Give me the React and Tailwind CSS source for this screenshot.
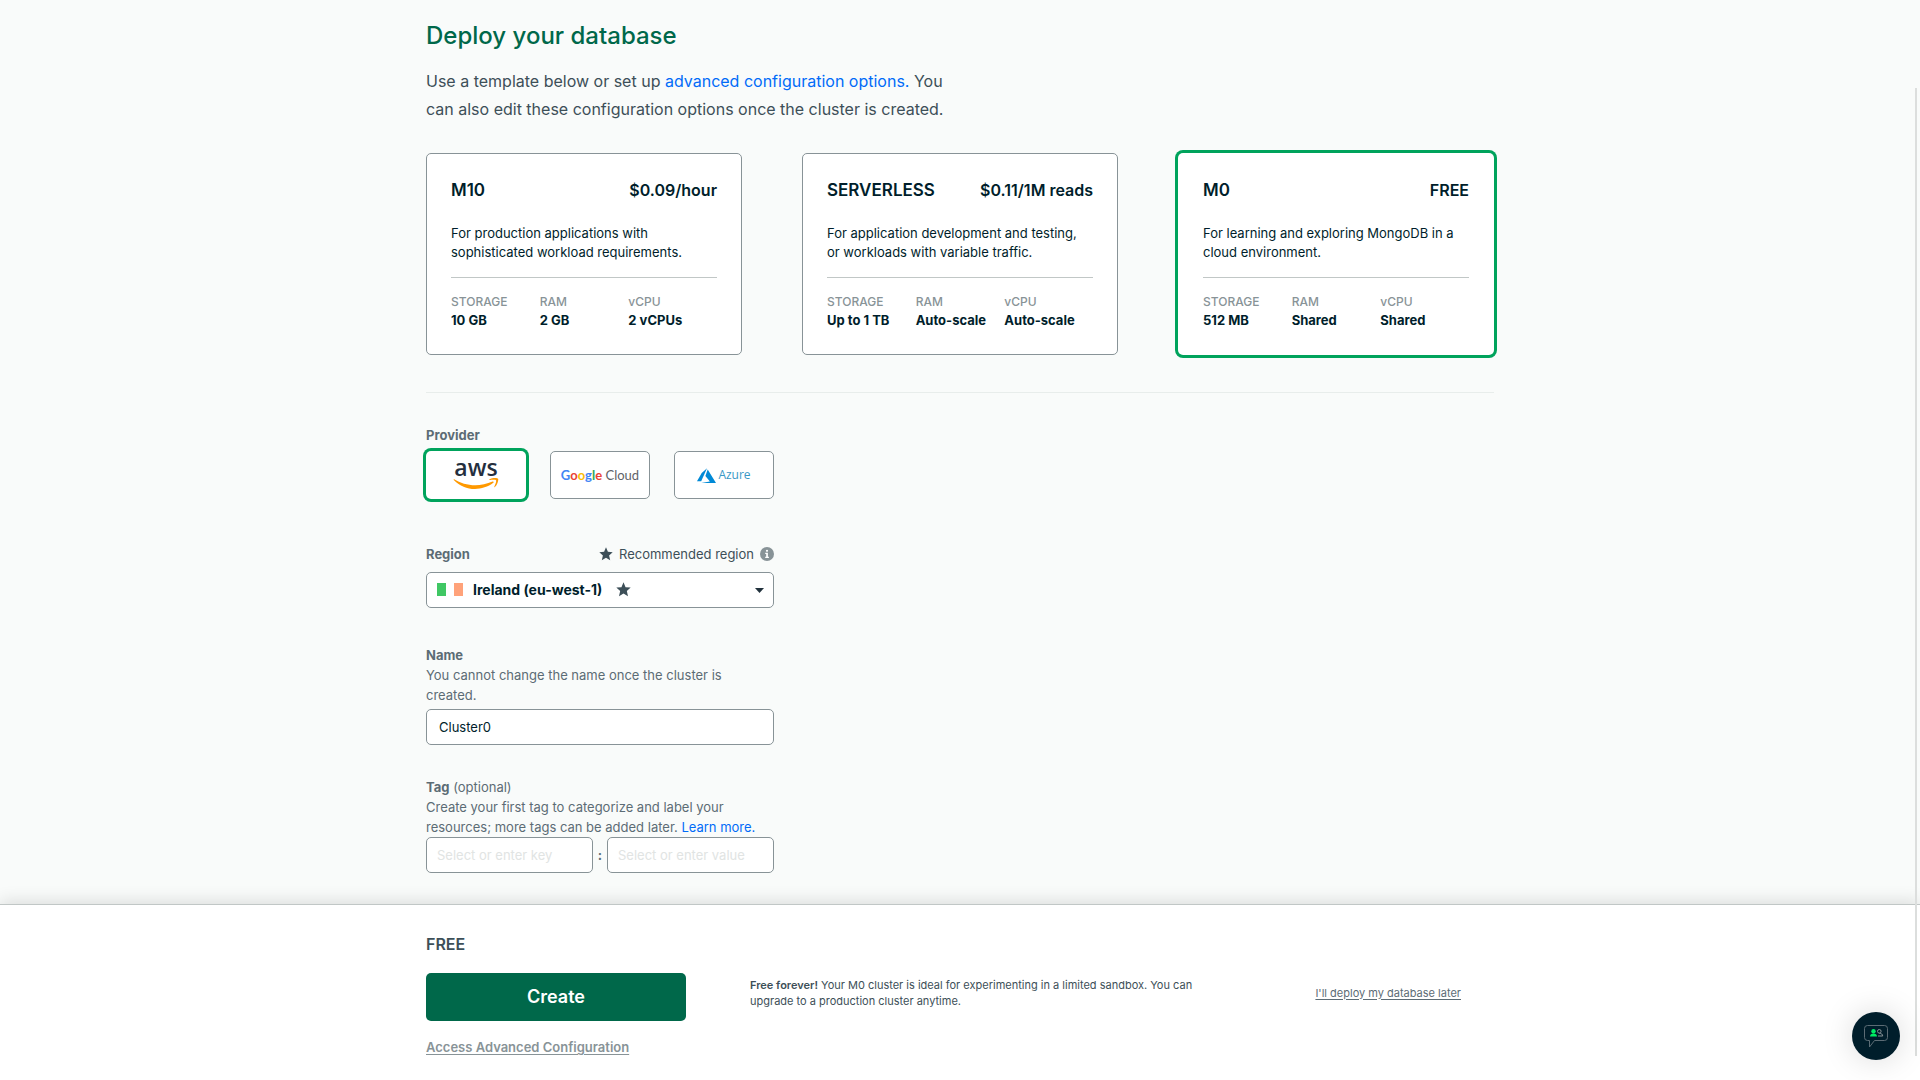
import { useState } from 'react';

const PLANS = [
  {
    id: 'M10',
    price: '$0.09/hour',
    description: 'For production applications with sophisticated workload requirements.',
    specs: { STORAGE: '10 GB', RAM: '2 GB', vCPU: '2 vCPUs' },
  },
  {
    id: 'SERVERLESS',
    price: '$0.11/1M reads',
    description: 'For application development and testing, or workloads with variable traffic.',
    specs: { STORAGE: 'Up to 1 TB', RAM: 'Auto-scale', vCPU: 'Auto-scale' },
  },
  {
    id: 'M0',
    price: 'FREE',
    description: 'For learning and exploring MongoDB in a cloud environment.',
    specs: { STORAGE: '512 MB', RAM: 'Shared', vCPU: 'Shared' },
  },
];

const PROVIDERS = [
  { id: 'aws', Logo: AwsLogo },
  { id: 'gcp', Logo: GoogleCloudLogo },
  { id: 'azure', Logo: AzureLogo },
];

function AwsLogo() {
  return (
    <span className="flex flex-col items-center pb-1">
      <span className="font-['Open_Sans'] text-[23px] leading-[22px] font-semibold text-[#252f3e]">aws</span>
      <svg className="h-3 w-[46px]" viewBox="0 0 46 12" fill="#ff9900">
        <path d="M1.200 1.200C7 4.900 14.500 7.200 22.200 7.200c5.700 0 11.800-1.200 17.400-3.600.9-.4 1.600.6.7 1.200C35.200 8.800 28.200 11 22 11 14 11 6.600 7.900 1 2.200.400 1.700.700.900 1.200 1.200z" />
        <path d="M43 2.200c-.6-.8-4.600-.4-6.600-.1-.5.100-.5-.4-.1-.7 3.200-1.900 8.300-1.400 8.800-.7.500.7-.1 5.700-3.200 8.400-.4.300-.8.200-.6-.3.600-1.500 2.400-5.200 1.700-6.600z" />
      </svg>
    </span>
  );
}

function GoogleCloudLogo() {
  return (
    <span className="font-['Lato'] text-[13px] whitespace-nowrap text-[#5f6368]">
      <span className="font-bold">
        <span className="text-[#4285f4]">G</span>
        <span className="text-[#ea4335]">o</span>
        <span className="text-[#fbbc05]">o</span>
        <span className="text-[#4285f4]">g</span>
        <span className="text-[#34a853]">l</span>
        <span className="text-[#ea4335]">e</span>
      </span>{' '}
      Cloud
    </span>
  );
}

function AzureLogo() {
  return (
    <span className="flex items-center gap-0.5">
      <svg className="h-[15px] w-[19px]" viewBox="0 0 19 15" fill="#0089d6">
        <path d="M10 0.300 4.700 4.900 0 13.300h4.200z" />
        <path d="M10.700 1.400 8.400 7.900l4.500 5.600-8.700 1.500H19z" />
      </svg>
      <span className="font-['Open_Sans'] text-xs font-medium text-[#3999c6]">Azure</span>
    </span>
  );
}

function StarIcon({ className }) {
  return (
    <svg className={className} viewBox="0 0 14 14" fill="#3d4f58">
      <path d="M7 .3l1.900 4.500 4.800.4-3.600 3.200 1.100 4.800L7 10.700l-4.200 2.500 1.100-4.800L.300 5.200l4.800-.4z" />
    </svg>
  );
}

function InfoIcon() {
  return (
    <svg className="h-3.5 w-3.5" viewBox="0 0 14 14">
      <circle cx="7" cy="7" r="7" fill="#889397" />
      <path d="M5.200 5.700h2.700v4h1V11H5.200V9.700h1V7h-1z" fill="#fff" />
      <circle cx="7" cy="3.800" r="1.100" fill="#fff" />
    </svg>
  );
}

function PlanCard({ plan, selected, onSelect }) {
  return (
    <button
      type="button"
      aria-pressed={selected}
      onClick={onSelect}
      className={`rounded-[5px] border bg-white p-6 text-left text-[#001e2b] ${
        selected ? 'border-transparent ring-3 ring-[#00a35c]' : 'border-[#889397]'
      }`}
    >
      <span className="flex justify-between leading-6">
        <span className="text-[17px] leading-6 font-semibold">{plan.id}</span>
        <span className="text-base leading-6 font-semibold">{plan.price}</span>
      </span>
      <span className="mt-[22px] block text-[13px] leading-[19px]">{plan.description}</span>
      <span className="mt-[15px] grid grid-cols-3 border-t border-[#c1c7c6] pt-3.5 leading-[19px]">
        {Object.entries(plan.specs).map(([label, value]) => (
          <span key={label} className="whitespace-nowrap">
            <span className="block text-xs leading-[19px] font-medium text-[#889397]">{label}</span>
            <span className="block text-[13px] leading-[19px] font-bold">{value}</span>
          </span>
        ))}
      </span>
    </button>
  );
}

function ChatButton() {
  return (
    <button
      type="button"
      aria-label="Open support chat"
      className="fixed right-5 bottom-5 z-20 flex h-12 w-12 items-center justify-center rounded-full bg-[#001e2b] shadow-[0_0_32px_rgba(0,0,0,0.15)]"
    >
      <svg className="h-6 w-6" viewBox="0 0 24 24" fill="none">
        <path
          d="M3.500 1.500h17a3 3 0 0 1 3 3v9a3 3 0 0 1-3 3H10.500L5.500 23v-6.500h-2a3 3 0 0 1-3-3v-9a3 3 0 0 1 3-3z"
          stroke="#5c6c75"
        />
        <circle cx="9.500" cy="7.300" r="2.200" fill="#00ed64" />
        <path d="M6 12.500c0-2 1.500-3 3.500-3s3.500 1 3.500 3z" fill="#00ed64" />
        <circle cx="15.300" cy="7.300" r="1.800" stroke="#889397" />
        <path d="M14 12h4.700c0-1.700-1.400-2.700-3.400-2.700" stroke="#889397" />
      </svg>
    </button>
  );
}

export default function App() {
  const [plan, setPlan] = useState('M0');
  const [provider, setProvider] = useState('aws');
  const [name, setName] = useState('Cluster0');

  return (
    <div className="flex min-h-screen flex-col bg-[#f9fbfa] font-['Inter',sans-serif] text-[#3d4f58]">
      <main className="mx-auto w-full max-w-[1068px] grow pt-5 pb-[31px]">
        <h1 className="text-2xl leading-8 font-medium text-[#00684a]">Deploy your database</h1>
        <p className="mt-[15px] max-w-[540px] text-base leading-7">
          Use a template below or set up{' '}
          <a href="#advanced" className="text-[#016bf8]">advanced configuration options.</a> You can also edit
          these configuration options once the cluster is created.
        </p>

        <div className="mt-[30px] grid grid-cols-3 gap-[60px]">
          {PLANS.map((item) => (
            <PlanCard key={item.id} plan={item} selected={item.id === plan} onSelect={() => setPlan(item.id)} />
          ))}
        </div>

        <hr className="mt-[37px] border-[#e8edeb]" />

        <form className="mt-8 w-[348px] text-[13px] leading-5 text-[#5c6c75]">
          <div role="group" aria-labelledby="provider-label">
            <p id="provider-label" className="font-bold">Provider</p>
            <div className="mt-1.5 grid grid-cols-3 gap-6">
              {PROVIDERS.map(({ id, Logo }) => (
                <button
                  key={id}
                  type="button"
                  aria-pressed={provider === id}
                  onClick={() => setProvider(id)}
                  className={`flex h-12 items-center justify-center rounded-[5px] border bg-white ${
                    provider === id ? 'border-transparent ring-3 ring-[#00a35c]' : 'border-[#889397]'
                  }`}
                >
                  <Logo />
                </button>
              ))}
            </div>
          </div>

          <div className="mt-[45px]">
            <div className="flex items-center justify-between">
              <label htmlFor="region" className="font-bold">Region</label>
              <span className="flex items-center gap-1.5 text-[#3d4f58]">
                <StarIcon className="h-3.5 w-3.5" />
                Recommended region
                <InfoIcon />
              </span>
            </div>
            <div className="relative mt-2">
              <select
                id="region"
                className="h-9 w-full appearance-none rounded-[5px] border border-[#889397] bg-white pl-[46px] text-sm font-bold text-[#001e2b]"
              >
                <option>Ireland (eu-west-1)</option>
              </select>
              <svg className="pointer-events-none absolute top-[11px] left-[11px] h-[13px] w-[26px]" viewBox="0 0 26 13">
                <path d="M0 0h9v13H0z" fill="#40c764" />
                <path d="M9 0h8v13H9z" fill="#fff" />
                <path d="M17 0h9v13h-9z" fill="#ffa27a" />
              </svg>
              <StarIcon className="pointer-events-none absolute top-2.5 left-[190px] h-[15px] w-[15px]" />
              <svg className="pointer-events-none absolute top-4 right-2.5 h-[5px] w-[9px]" viewBox="0 0 9 5" fill="#21313c">
                <path d="M0 0h9L4.500 5z" />
              </svg>
            </div>
          </div>

          <div className="mt-[37px]">
            <label htmlFor="cluster-name" className="block font-bold">Name</label>
            <p>You cannot change the name once the cluster is created.</p>
            <input
              id="cluster-name"
              value={name}
              onChange={(e) => setName(e.target.value)}
              className="mt-1 block h-9 w-full rounded-[5px] border border-[#889397] bg-white px-3 text-[#001e2b]"
            />
          </div>

          <div className="mt-8">
            <label htmlFor="tag-key" className="block"><b>Tag</b> (optional)</label>
            <p>
              Create your first tag to categorize and label your resources; more tags can be added later.{' '}
              <a href="#tags" className="text-[#016bf8]">Learn more.</a>
            </p>
            <div className="flex items-center">
              <input
                id="tag-key"
                placeholder="Select or enter key"
                className="h-9 w-0 grow rounded-[5px] border border-[#889397] bg-white px-2.5 placeholder:text-[#e1e4e3]"
              />
              <span className="w-3.5 text-center font-bold">:</span>
              <input
                aria-label="Tag value"
                placeholder="Select or enter value"
                className="h-9 w-0 grow rounded-[5px] border border-[#889397] bg-white px-2.5 placeholder:text-[#e1e4e3]"
              />
            </div>
          </div>
        </form>
      </main>

      <footer className="sticky bottom-0 border-t border-[#c1c7c6] bg-white shadow-[0_-3px_16px_rgba(0,0,0,0.12)]">
        <div className="mx-auto flex w-full max-w-[1068px] items-center pt-[27px] pb-[23px]">
          <div className="w-[260px] shrink-0">
            <p className="text-base leading-6 font-semibold">FREE</p>
            <button
              type="button"
              className="mt-[17px] block h-12 w-full rounded-[5px] bg-[#00684a] text-lg font-semibold text-white"
            >
              Create
            </button>
            <a href="#advanced" className="mt-4 block text-[13px] leading-5 font-semibold text-[#889397] underline underline-offset-2">
              Access Advanced Configuration
            </a>
          </div>
          <p className="mb-1 ml-16 w-[480px] text-[11px] leading-4">
            <b className="font-semibold">Free forever!</b> Your M0 cluster is ideal for experimenting in a limited
            sandbox. You can upgrade to a production cluster anytime.
          </p>
          <a href="#later" className="mb-1 ml-auto pr-[33px] text-[11px] leading-4 text-[#5c6c75] underline underline-offset-2">
            I'll deploy my database later
          </a>
        </div>
      </footer>

      <div className="fixed top-[88px] right-[3px] bottom-6 z-10 w-0.5 bg-[#dcdedd]" />
      <ChatButton />
    </div>
  );
}
